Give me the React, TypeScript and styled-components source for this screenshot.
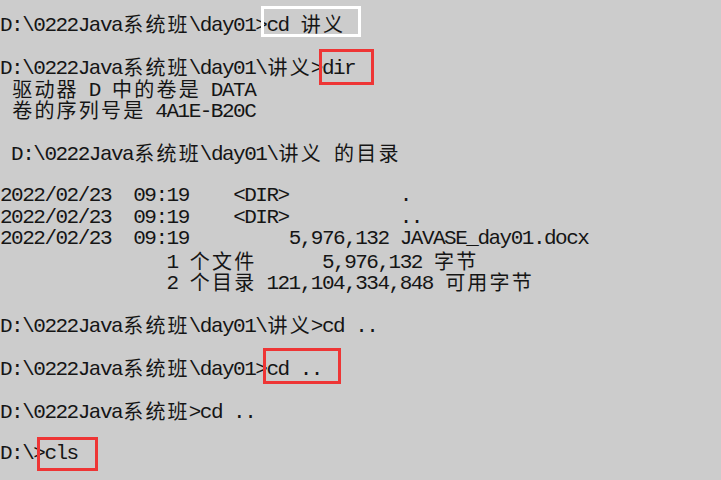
import React from "react";
import styled, { createGlobalStyle } from "styled-components";

const CELL = 11.1;

const GlobalStyle = createGlobalStyle`
  html, body {
    margin: 0;
    padding: 0;
    background: #cccccc;
  }
`;

const Screen = styled.div`
  width: 721px;
  height: 480px;
  overflow: hidden;
  box-sizing: border-box;
  padding-top: 13px;
  background: #cccccc;
  color: #151515;
  font-family: "Liberation Mono", "DejaVu Sans Mono", monospace;
  font-size: 21px;
  letter-spacing: -1.5px;
`;

const Line = styled.div`
  position: relative;
  height: 21.5px;
  line-height: 21.5px;
  white-space: pre;
`;

const Wide = styled.span`
  display: inline-block;
  width: ${CELL * 2}px;
  text-align: center;
  font-family: "Noto Sans CJK SC", sans-serif;
  font-size: 20px;
  letter-spacing: 0;
  line-height: 21.5px;
  vertical-align: -1px;
`;

const Callout = styled.span<{
  $left: number;
  $top: number;
  $w: number;
  $h: number;
  $tone: "white" | "red";
}>`
  position: absolute;
  left: ${(p) => p.$left}px;
  top: ${(p) => p.$top}px;
  width: ${(p) => p.$w}px;
  height: ${(p) => p.$h}px;
  box-sizing: border-box;
  border: 3px solid ${(p) => (p.$tone === "white" ? "#ffffff" : "#ee3535")};
  pointer-events: none;
`;

type Box = { left: number; top: number; w: number; h: number; tone: "white" | "red" };

const lines: { text: string; box?: Box }[] = [
  { text: "D:\\0222Java系统班\\day01>cd 讲义", box: { left: 261, top: -7, w: 100, h: 31, tone: "white" } },
  { text: "" },
  { text: "D:\\0222Java系统班\\day01\\讲义>dir", box: { left: 319, top: -7, w: 55, h: 36, tone: "red" } },
  { text: " 驱动器 D 中的卷是 DATA" },
  { text: " 卷的序列号是 4A1E-B20C" },
  { text: "" },
  { text: " D:\\0222Java系统班\\day01\\讲义 的目录" },
  { text: "" },
  { text: "2022/02/23  09:19    <DIR>          ." },
  { text: "2022/02/23  09:19    <DIR>          .." },
  { text: "2022/02/23  09:19         5,976,132 JAVASE_day01.docx" },
  { text: "               1 个文件      5,976,132 字节" },
  { text: "               2 个目录 121,104,334,848 可用字节" },
  { text: "" },
  { text: "D:\\0222Java系统班\\day01\\讲义>cd .." },
  { text: "" },
  { text: "D:\\0222Java系统班\\day01>cd ..", box: { left: 263, top: -9, w: 78, h: 36, tone: "red" } },
  { text: "" },
  { text: "D:\\0222Java系统班>cd .." },
  { text: "" },
  { text: "D:\\>cls", box: { left: 37, top: -6, w: 61, h: 34, tone: "red" } },
];

const isWide = (ch: string) => ch.charCodeAt(0) >= 0x2e80;

function renderText(text: string) {
  const parts: React.ReactNode[] = [];
  let buf = "";
  let key = 0;
  for (const ch of Array.from(text)) {
    if (isWide(ch)) {
      if (buf) {
        parts.push(buf);
        buf = "";
      }
      parts.push(<Wide key={key++}>{ch}</Wide>);
    } else {
      buf += ch;
    }
  }
  if (buf) parts.push(buf);
  return parts;
}

export default function App() {
  return (
    <>
      <GlobalStyle />
      <Screen>
        {lines.map((l, i) => (
          <Line key={i}>
            {l.text ? renderText(l.text) : " "}
            {l.box && (
              <Callout
                $left={l.box.left}
                $top={l.box.top}
                $w={l.box.w}
                $h={l.box.h}
                $tone={l.box.tone}
              />
            )}
          </Line>
        ))}
      </Screen>
    </>
  );
}
